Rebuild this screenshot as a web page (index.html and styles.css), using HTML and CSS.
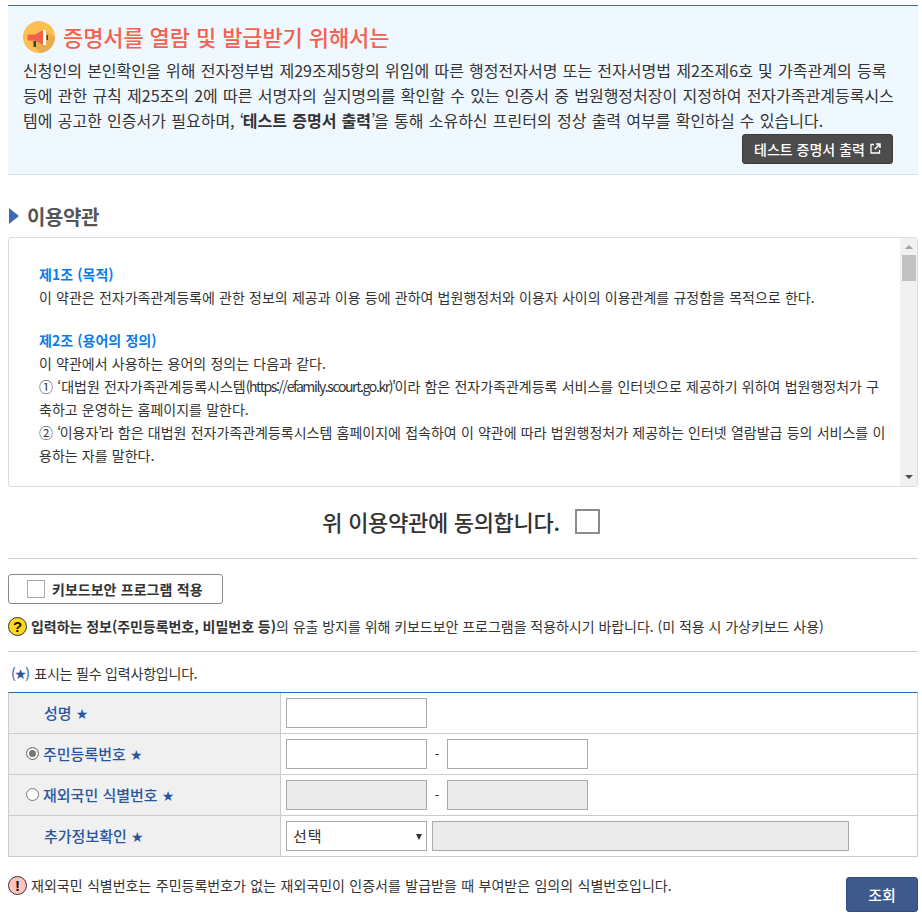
FILE: index.html
```html
<!DOCTYPE html>
<html lang="ko">
<head>
<meta charset="utf-8">
<title>증명서 열람 및 발급</title>
<link rel="stylesheet" href="styles.css">
</head>
<body>
<div class="page">
  <section class="notice">
    <h2 class="notice-title">
      <svg class="mega" viewBox="0 0 32 32" width="32" height="32" aria-hidden="true">
        <circle cx="16" cy="16" r="16" fill="#fdbf52"/>
        <path d="M8 20 L21 9 L32 16 A16 16 0 0 1 17 32 Z" fill="#e8ae4e"/>
        <path d="M6 13.5h6l8-4.5v15l-8-4.5H6a1.500 1.500 0 0 1-1.500-1.500v-3A1.500 1.500 0 0 1 6 13.500z" fill="#f4614a"/>
        <rect x="20" y="9" width="3" height="15" fill="#fff"/>
        <rect x="23.500" y="14" width="1.500" height="5" fill="#3a3f4a"/>
        <rect x="10.500" y="20" width="2.500" height="6" fill="#3a3f4a"/>
      </svg>
      <span class="notice-title-text">증명서를 열람 및 발급받기 위해서는</span>
    </h2>
    <p class="notice-text">신청인의 본인확인을 위해 전자정부법 제29조제5항의 위임에 따른 행정전자서명 또는 전자서명법 제2조제6호 및 가족관계의 등록<br>등에 관한 규칙 제25조의 2에 따른 서명자의 실지명의를 확인할 수 있는 인증서 중 법원행정처장이 지정하여 전자가족관계등록시스<br>템에 공고한 인증서가 필요하며, <span class="q">‘</span><b>테스트 증명서 출력</b><span class="q">’</span>을 통해 소유하신 프린터의 정상 출력 여부를 확인하실 수 있습니다.</p>
    <div class="notice-actions">
      <a class="btn-dark">테스트 증명서 출력
        <svg class="ext" viewBox="0 0 11 11" width="11" height="11" aria-hidden="true"><path d="M4 1.500H1v8.500h8.500V7" fill="none" stroke="#fff" stroke-width="1.300"/><path d="M6 1h4v4M10 1L4.800 6.200" fill="none" stroke="#fff" stroke-width="1.500"/></svg>
      </a>
    </div>
  </section>

  <h3 class="section-title"><span class="tri"></span>이용약관</h3>

  <div class="terms">
    <div class="terms-body">
      <p class="art">제1조 (목적)</p>
      <p>이 약관은 전자가족관계등록에 관한 정보의 제공과 이용 등에 관하여 법원행정처와 이용자 사이의 이용관계를 규정함을 목적으로 한다.</p>
      <p class="blank">&nbsp;</p>
      <p class="art">제2조 (용어의 정의)</p>
      <p>이 약관에서 사용하는 용어의 정의는 다음과 같다.</p>
      <p>① ‘대법원 전자가족관계등록시스템<span class="url">(https://efamily.scourt.go.kr)</span><span class="q">’</span>이라 함은 전자가족관계등록 서비스를 인터넷으로 제공하기 위하여 법원행정처가 구<br>축하고 운영하는 홈페이지를 말한다.</p>
      <p>② <span class="q">‘</span>이용자<span class="q">’</span>라 함은 대법원 전자가족관계등록시스템 홈페이지에 접속하여 이 약관에 따라 법원행정처가 제공하는 인터넷 열람발급 등의 서비스를 이<br>용하는 자를 말한다.</p>
    </div>
    <div class="scrollbar">
      <span class="arrow up"></span>
      <span class="thumb"></span>
      <span class="arrow down"></span>
    </div>
  </div>

  <div class="agree"><span class="agree-text">위 이용약관에 동의합니다.</span><span class="agree-box"></span></div>

  <div class="secure">
    <label class="secure-btn"><span class="secure-box"></span>키보드보안 프로그램 적용</label>
    <p class="hint"><span class="ico-q">?</span><span><b>입력하는 정보(주민등록번호, 비밀번호 등)</b>의 유출 방지를 위해 키보드보안 프로그램을 적용하시기 바랍니다. (미 적용 시 가상키보드 사용)</span></p>
  </div>

  <p class="req-note"><span class="paren">(<span class="star">★</span>)</span> 표시는 필수 입력사항입니다.</p>

  <div class="form">
    <div class="row">
      <div class="th"><span class="th-in">성명 <span class="star">★</span></span></div>
      <div class="td"><span class="field"></span></div>
    </div>
    <div class="row">
      <div class="th"><span class="radio on"></span><span class="th-rad">주민등록번호 <span class="star">★</span></span></div>
      <div class="td"><span class="field"></span><span class="dash">-</span><span class="field"></span></div>
    </div>
    <div class="row">
      <div class="th"><span class="radio"></span><span class="th-rad">재외국민 식별번호 <span class="star">★</span></span></div>
      <div class="td"><span class="field off"></span><span class="dash">-</span><span class="field off"></span></div>
    </div>
    <div class="row">
      <div class="th"><span class="th-in">추가정보확인 <span class="star">★</span></span></div>
      <div class="td"><span class="field sel">선택<span class="caret"></span></span><span class="field off wide"></span></div>
    </div>
  </div>

  <div class="foot">
    <p class="warn"><span class="ico-ex">!</span>재외국민 식별번호는 주민등록번호가 없는 재외국민이 인증서를 발급받을 때 부여받은 임의의 식별번호입니다.</p>
    <a class="btn-blue">조회</a>
  </div>
</div>
</body>
</html>
```
FILE: styles.css
```css
* { box-sizing: border-box; }
html, body { margin: 0; padding: 0; background: #fff; }
body {
  font-family: "Noto Sans CJK KR", "Noto Sans", sans-serif;
  color: #333;
  overflow: hidden;
}
p { margin: 0; }
.page { width: 910px; height: 913px; margin-left: 8px; padding-top: 5px; }
.q { letter-spacing: -1.5px; }

.notice {
  height: 170px;
  background: #f0f8ff;
  border-top: 1px solid #3b68a8;
  border-bottom: 1px solid #cfe2f3;
  padding: 15px 15px 0;
}
.notice-title {
  display: flex;
  align-items: center;
  gap: 8px;
  margin: 0;
  height: 32px;
  font-size: 22px;
  line-height: 32px;
  font-weight: 500;
  color: #f5614f;
}
.notice-title-text { padding-bottom: 2px; letter-spacing: -0.1px; }
.notice-text {
  margin-top: 5px;
  font-size: 16px;
  line-height: 25px;
  word-spacing: 0.77px;
  color: #333;
  white-space: nowrap;
}
.notice-text b { font-weight: 700; }
.notice-actions { display: flex; justify-content: flex-end; padding-right: 10px; margin-top: 1px; }
.btn-dark {
  display: flex;
  align-items: center;
  justify-content: center;
  gap: 5px;
  width: 151px;
  height: 30px;
  background: #4c4c4c;
  border: 1px solid #3a3a3a;
  border-radius: 3px;
  color: #fff;
  font-size: 14px;
  font-weight: 500;
}
.ext { margin-bottom: 2px; }

.section-title {
  display: flex;
  align-items: center;
  margin: 26px 0 0;
  height: 30px;
  font-size: 20px;
  letter-spacing: -0.4px;
  font-weight: 700;
  color: #555;
}
.tri {
  width: 0; height: 0;
  margin-left: 1px;
  margin-right: 8px;
  border-left: 10px solid #3f6ab3;
  border-top: 8px solid transparent;
  border-bottom: 8px solid transparent;
}

.terms {
  display: flex;
  margin-top: 6px;
  height: 250px;
  border: 1px solid #ddd;
  border-radius: 3px;
  overflow: hidden;
}
.terms-body {
  flex: 1;
  padding: 25px 0 0 30px;
  font-size: 14px;
  line-height: 23px;
  word-spacing: 0.3px;
  color: #333;
  white-space: nowrap;
}
.terms-body .blank { height: 20px; }
.art { color: #0b7dea; font-weight: 700; }
.url { letter-spacing: -1.4px; }
.scrollbar {
  width: 17px;
  background: #f1f1f1;
  display: flex;
  flex-direction: column;
  align-items: center;
  position: relative;
}
.thumb { width: 14px; height: 26px; margin-top: 6px; background: #c1c1c1; }
.arrow { width: 0; height: 0; border-left: 4px solid transparent; border-right: 4px solid transparent; }
.arrow.up { margin-top: 7px; border-bottom: 4px solid #a3a3a3; }
.arrow.down { margin-top: auto; margin-bottom: 7px; border-top: 4px solid #505050; }

.agree {
  display: flex;
  align-items: center;
  justify-content: center;
  gap: 15px;
  height: 72px;
  padding: 0 4px 2px 0;
  border-bottom: 1px solid #ccc;
  font-size: 22px;
  letter-spacing: -0.3px;
  font-weight: 500;
  color: #333;
}
.agree-text { padding-bottom: 1px; }
.agree-box {
  width: 25px; height: 25px;
  border: 2px solid #8c8c8c;
  background: #fff;
}

.secure { border-bottom: 1px solid #ccc; height: 93px; padding-top: 15px; }
.secure-btn {
  display: flex;
  align-items: center;
  gap: 7px;
  width: 215px;
  height: 30px;
  padding-left: 18px;
  border: 1px solid #888;
  border-radius: 3px;
  font-size: 14px;
  word-spacing: 0.5px;
  font-weight: 700;
  color: #333;
}
.secure-box { width: 18px; height: 18px; border: 1px solid #aaa; background: #fff; }
.hint {
  display: flex;
  align-items: center;
  gap: 4px;
  margin-top: 11px;
  height: 22px;
  font-size: 14px;
  letter-spacing: -0.04px;
  color: #333;
  white-space: nowrap;
}
.hint b { font-weight: 700; }
.ico-q, .ico-ex {
  display: inline-flex;
  align-items: center;
  justify-content: center;
  width: 19px; height: 19px;
  border-radius: 50%;
  border: 1px solid #333;
  font-family: "Liberation Sans", sans-serif;
  font-size: 15px;
  font-weight: 700;
  color: #111;
  flex: none;
}
.ico-q { background: #ffd81a; }
.ico-ex { background: #ffc4bd; }

.req-note {
  height: 40px;
  padding: 10px 0 0 3px;
  font-size: 14px;
  line-height: 22px;
  letter-spacing: -0.2px;
  color: #333;
}
.paren { color: #2a56a0; letter-spacing: -1.5px; margin-right: 2px; }
.star { color: #2a56a0; font-family: "DejaVu Sans", sans-serif; font-weight: 700; font-size: 14px; line-height: 1; letter-spacing: -1.5px; }

.form {
  border-top: 1px solid #2f64b4;
  border-left: 1px solid #ccc;
  border-right: 1px solid #ccc;
}
.row {
  display: grid;
  grid-template-columns: 272px 1fr;
  height: 41px;
  border-bottom: 1px solid #ccc;
}
.th {
  display: flex;
  align-items: center;
  padding: 0 0 1px 17px;
  background: #f0f0f0;
  border-right: 1px solid #ccc;
  font-size: 15px;
  word-spacing: 0;
  font-weight: 500;
  color: #2a56a0;
}
.th-in { padding-left: 18px; }
.th-rad { padding-left: 4px; }
.radio {
  width: 13px; height: 13px;
  border-radius: 50%;
  border: 1px solid #777;
  background: #fff;
  flex: none;
}
.radio.on { background: #777; box-shadow: inset 0 0 0 2px #fff; }
.td { display: flex; align-items: center; padding-left: 5px; gap: 0; }
.field {
  display: flex;
  align-items: center;
  width: 141px;
  height: 30px;
  border: 1px solid #aaa;
  background: #fff;
}
.field.off { background: #ebebeb; }
.field.wide { width: 417px; margin-left: 5px; }
.field.sel {
  position: relative;
  padding: 0 0 2px 6px;
  font-size: 15px;
  letter-spacing: 1px;
  color: #333;
}
.caret {
  position: absolute;
  right: 4px;
  top: 12px;
  width: 0; height: 0;
  border-left: 3px solid transparent;
  border-right: 3px solid transparent;
  border-top: 6px solid #333;
}
.dash { width: 20px; text-align: center; font-size: 14px; color: #444; }

.foot {
  display: flex;
  justify-content: space-between;
  padding-top: 18px;
}
.warn {
  display: flex;
  align-items: center;
  gap: 4px;
  height: 20px;
  font-size: 14px;
  word-spacing: 0.5px;
  color: #333;
  white-space: nowrap;
}
.btn-blue {
  display: flex;
  align-items: center;
  justify-content: center;
  width: 72px;
  height: 35px;
  margin-top: 2px;
  background: #3e5a8c;
  border: 1px solid #2f4d85;
  border-radius: 3px;
  color: #fff;
  font-size: 15px;
  font-weight: 500;
}
```
